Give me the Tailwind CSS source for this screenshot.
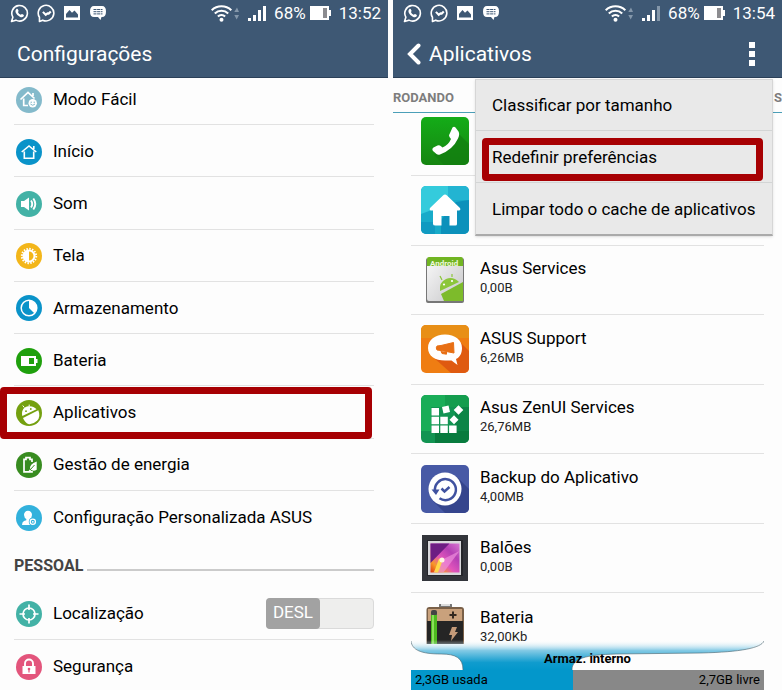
<!DOCTYPE html>
<html lang="pt-BR">
<head>
<meta charset="utf-8">
<meta name="viewport" content="width=device-width, initial-scale=1">
<title>Configurações</title>
<script src="https://cdn.jsdelivr.net/npm/@tailwindcss/browser@4"></script>
</head>
<body class="bg-[#fdfdfd] font-[Roboto,'Noto_Sans',sans-serif] text-black">

<svg class="hidden" aria-hidden="true">
  <!-- status bar glyphs -->
  <symbol id="whatsapp" viewBox="0 0 20 20">
    <path d="M1.6 18.4 3 13.9A8.2 8.2 0 1 1 6.2 17Z" fill="none" stroke="#fff" stroke-width="1.7" stroke-linejoin="round"/>
    <path d="M6.6 5.5c.8-.8 1.5-.5 1.8.3l.6 1.3c.2.6-.6 1-.7 1.4.6 1.3 1.6 2.3 3 2.900.5-.2.8-1.100 1.400-.9l1.500.8c.8.400.4 1.700-.3 2.200-1 .7-2.400.500-3.600-.1-2-1-3.500-2.600-4.300-4.400-.4-1.200-.4-2.500.6-3.500Z" fill="#fff"/>
  </symbol>
  <symbol id="messenger" viewBox="0 0 20 20">
    <path d="M2.600 18.300V14A8.200 8.200 0 1 1 6 17Z" fill="none" stroke="#fff" stroke-width="1.700" stroke-linejoin="round"/>
    <path d="m6.200 8.300 3 3 1.800-1.400 1.300.2 2.200-2.300" fill="none" stroke="#fff" stroke-width="2.200"/>
  </symbol>
  <symbol id="picture" viewBox="0 0 16 14">
    <path fill-rule="evenodd" d="M0 0h16v14H0ZM2 11.500h12V8.500L10.500 4.500 8 6.800 5.500 4 2 8Z" fill="#fff"/>
  </symbol>
  <symbol id="bubble" viewBox="0 0 16 14">
    <path d="M4 0h8q4 0 4 5.500T12 11h-.5l-1 3-2.500-3H4Q0 11 0 5.500T4 0Z" fill="#fff"/>
    <path d="M3.500 3.500h9M3.500 5.700h9M3.500 7.900h9" stroke="#3e5874" stroke-width="1" stroke-dasharray="3 .6"/>
  </symbol>
  <symbol id="wifi" viewBox="0 0 28 18">
    <g fill="none" stroke="#fff" stroke-width="2.100"><path d="M.7 6.200a14.300 14.300 0 0 1 19.600 0"/><path d="M3.800 9.400a9.700 9.700 0 0 1 13.400 0"/><path d="M6.900 12.600a5.200 5.200 0 0 1 7.200 0"/></g>
    <circle cx="10.500" cy="15.700" r="2" fill="#fff"/>
    <path d="m23.300 8 2.700-4.500L28 8Zm0 3H28l-2.300 4.500Z" fill="#8497aa"/>
  </symbol>
  <symbol id="signal" viewBox="0 0 18 16">
    <path d="M0 13h3v3H0Z" fill="#fff"/><path d="M5 10h3v6H5Zm5-5h3v11h-3Z" fill="#fff"/><path d="M15 1h3v15h-3Z" fill="currentColor"/>
  </symbol>
  <symbol id="battery" viewBox="0 0 21 14">
    <path d="M0 0h19v4h2v6h-2v4H0Z" fill="#fff"/><path d="M13 2h4v10h-4Z" fill="#8c8c90"/>
  </symbol>

  <!-- settings icons -->
  <symbol id="easy" viewBox="0 0 26 26">
    <circle cx="13" cy="13" r="13" fill="#84bacb"/>
    <path d="M4.500 12.500 12 5.500l6.500 6M17 9V6M7.700 11.500v7H12" fill="none" stroke="#fff" stroke-width="1.700"/>
    <circle cx="16.700" cy="16.300" r="4.200" fill="#fff"/><circle cx="15.200" cy="15.200" r=".7" fill="#84bacb"/><circle cx="18.200" cy="15.200" r=".7" fill="#84bacb"/><path d="M14.400 17q2.300 2.600 4.600 0" fill="none" stroke="#84bacb"/>
  </symbol>
  <symbol id="home" viewBox="0 0 26 26">
    <circle cx="13" cy="13" r="13" fill="#0a93c9"/>
    <path d="m5.700 13 7.300-6 7.300 6M17.800 10V7M8.300 12.500v6.700h9.400v-6.700" fill="none" stroke="#fff" stroke-width="1.600"/>
  </symbol>
  <symbol id="sound" viewBox="0 0 26 26">
    <circle cx="13" cy="13" r="13" fill="#43b2a6"/>
    <path d="M5 10h3l5-3.500v13L8 16H5Z" fill="#fff"/><path d="M15 9.500q2.500 3.500 0 7M17.300 7.500q4 5.500 0 11" fill="none" stroke="#fff" stroke-width="1.900"/>
  </symbol>
  <symbol id="display" viewBox="0 0 26 26">
    <circle cx="13" cy="13" r="13" fill="#f3b61a"/>
    <circle cx="13" cy="13" r="7.200" fill="none" stroke="#fff" stroke-width="2" stroke-dasharray="1.500 1.327"/>
    <circle cx="13" cy="13" r="5.500" fill="none" stroke="#fff" stroke-width="2"/><path d="M13 7.500v11a5.500 5.500 0 0 1 0-11Z" fill="#fff"/>
  </symbol>
  <symbol id="storage" viewBox="0 0 26 26">
    <circle cx="13" cy="13" r="13" fill="#0a93c9"/>
    <circle cx="13" cy="13" r="7.800" fill="none" stroke="#fff" stroke-width="1.500"/><path d="M13 13V5.500a7.500 7.500 0 0 1 5.300 12.800Z" fill="#fff"/>
  </symbol>
  <symbol id="power" viewBox="0 0 26 26">
    <circle cx="13" cy="13" r="13" fill="#1fa00d"/>
    <path fill-rule="evenodd" d="M5 8h15v3h1.500v4H20v3H5Zm8 2v6h5v-6Z" fill="#fff"/>
  </symbol>
  <symbol id="apps" viewBox="0 0 26 26">
    <circle cx="13" cy="13" r="13" fill="#74a010"/>
    <path d="M6.300 16C4.800 9.500 9 6.700 12.300 6.300c4-.4 7 1.200 8.200 3Z" fill="#fff"/>
    <path d="M7 18 22.300 10.300q2.700 6.500-1.300 10.400Q17 24.500 13 24.300 9 23 7 18Z" fill="#fff"/>
    <path d="m8.300 7.500-1.600-2M13.200 6.500V4.600" stroke="#fff"/><circle cx="10" cy="11.200" r=".9" fill="#74a010"/><circle cx="14.800" cy="9" r=".9" fill="#74a010"/>
  </symbol>
  <symbol id="energy" viewBox="0 0 26 26">
    <circle cx="13" cy="13" r="13" fill="#388c20"/>
    <path d="M16 10V7.300h-2V5.700h-4v1.600H8v12.500h8V19" fill="none" stroke="#fff" stroke-width="1.700"/>
    <path d="M20.700 9.500v8.200q-3 2-5.300.3L13 20.500l-.8-1 2-2.500q-1-4.800 6.500-7.500Z" fill="#fff"/><path d="m14 18 4.500-5" stroke="#388c20" stroke-width="1"/>
  </symbol>
  <symbol id="custom" viewBox="0 0 26 26">
    <circle cx="13" cy="13" r="13" fill="#32b1dc"/>
    <path d="M12 5.700a4 4 0 0 1 4 4.300q-.3 3-2 4v1.500L17 17l-3 3H6q0-3 2-4l2.300-.8V14Q8.300 13 8 10a4 4 0 0 1 4-4.300Z" fill="#fff"/>
    <circle cx="16.800" cy="16.800" r="4" fill="#32b1dc"/><circle cx="16.800" cy="16.800" r="2.600" fill="none" stroke="#fff" stroke-width="1.300"/><circle cx="16.800" cy="16.800" r=".9" fill="#fff"/>
  </symbol>
  <symbol id="location" viewBox="0 0 26 26">
    <circle cx="13" cy="13" r="13" fill="#43b2a6"/>
    <circle cx="13" cy="13" r="6" fill="none" stroke="#fff" stroke-width="1.700"/><path d="M13 3.500V9M13 17v5.500M3.500 13H9M17 13h5.500" stroke="#fff" stroke-width="1.700"/>
  </symbol>
  <symbol id="lock" viewBox="0 0 26 26">
    <circle cx="13" cy="13" r="13" fill="#e3557c"/>
    <path d="M9 12.500V9.500a4 4 0 0 1 8 0v3" fill="none" stroke="#fff" stroke-width="1.900"/><path d="M6.500 12h13v8h-13Z" fill="#fff"/><circle cx="13" cy="15" r="1.300" fill="#e3557c"/><path d="M12.400 15h1.200v3.500h-1.200Z" fill="#e3557c"/>
  </symbol>
</svg>

<div class="flex h-screen gap-[5px] overflow-hidden">

  <!-- Settings -->
  <section class="flex-[388] overflow-hidden" aria-label="Configurações">
    <header class="h-[78px] border-b border-[#2b4058] bg-[#3e5874] text-white">
      <div class="flex h-[26px] items-center pl-[10px] pr-[7px] text-[17px] leading-none">
        <div class="flex flex-1 items-center gap-2">
          <svg class="size-[19px]"><use href="#whatsapp"/></svg>
          <svg class="size-[19px]"><use href="#messenger"/></svg>
          <svg class="h-[14px] w-4"><use href="#picture"/></svg>
          <svg class="ml-[2px] h-[14px] w-4"><use href="#bubble"/></svg>
        </div>
        <svg class="mr-[9px] h-[18px] w-[28px]"><use href="#wifi"/></svg>
        <svg class="mr-2 h-4 w-[18px] text-white"><use href="#signal"/></svg>
        <span class="mr-1">68%</span>
        <svg class="mr-2 h-[14px] w-[21px]"><use href="#battery"/></svg>
        <time>13:52</time>
      </div>
      <h1 class="px-[17px] pt-[13px] text-[21px] leading-[30px]">Configurações</h1>
    </header>

    <ul class="mx-[14px] grid min-h-[465px] grid-rows-[47px_repeat(8,1fr)] text-[17px]">
      <li class="border-b border-[#e2e2e2]"><a href="#" class="flex h-full items-center gap-[11px] pb-[2px] pl-[2px]"><svg class="size-[26px]"><use href="#easy"/></svg>Modo Fácil</a></li>
      <li class="border-b border-[#e2e2e2]"><a href="#" class="flex h-full items-center gap-[11px] pl-[2px] pt-[2px]"><svg class="size-[26px]"><use href="#home"/></svg>Início</a></li>
      <li class="border-b border-[#e2e2e2]"><a href="#" class="flex h-full items-center gap-[11px] pl-[2px] pt-[2px]"><svg class="size-[26px]"><use href="#sound"/></svg>Som</a></li>
      <li class="border-b border-[#e2e2e2]"><a href="#" class="flex h-full items-center gap-[11px] pl-[2px] pt-[2px]"><svg class="size-[26px]"><use href="#display"/></svg>Tela</a></li>
      <li class="border-b border-[#e2e2e2]"><a href="#" class="flex h-full items-center gap-[11px] pl-[2px] pt-[2px]"><svg class="size-[26px]"><use href="#storage"/></svg>Armazenamento</a></li>
      <li class="border-b border-[#e2e2e2]"><a href="#" class="flex h-full items-center gap-[11px] pl-[2px] pt-[2px]"><svg class="size-[26px]"><use href="#power"/></svg>Bateria</a></li>
      <li class="relative border-b border-[#e2e2e2]"><a href="#" class="flex h-full items-center gap-[11px] pl-[2px] pt-[2px]"><svg class="size-[26px]"><use href="#apps"/></svg>Aplicativos</a>
        <span class="pointer-events-none absolute -bottom-px -left-[14px] right-[2px] top-px rounded border-[7px] border-[#a70003]"></span></li>
      <li class="border-b border-[#e2e2e2]"><a href="#" class="flex h-full items-center gap-[11px] pl-[2px] pt-[2px]"><svg class="size-[26px]"><use href="#energy"/></svg>Gestão de energia</a></li>
      <li><a href="#" class="flex h-full items-center gap-[11px] pl-[2px] pt-[2px]"><svg class="size-[26px]"><use href="#custom"/></svg>Configuração Personalizada ASUS</a></li>
    </ul>

    <div class="mx-[14px] flex h-11 items-center gap-1 pt-[2px] text-[#444]">
      <h2 class="text-[16px] font-bold leading-5">PESSOAL</h2>
      <span class="mt-2 h-[2px] flex-1 bg-[#cbcbcb]"></span>
    </div>
    <ul class="mx-[14px] text-[17px]">
      <li class="flex h-[53px] items-center border-b border-[#e2e2e2]">
        <a href="#" class="flex flex-1 items-center gap-[11px] pl-[2px] pt-[2px]"><svg class="size-[26px]"><use href="#location"/></svg>Localização</a>
        <button type="button" role="switch" aria-checked="false" aria-label="Localização" class="flex h-[31px] w-[108px] rounded border border-[#dadada] bg-[#eeeeed]"><span class="-my-px -ml-px flex h-[31px] w-[54px] items-center justify-center rounded bg-[#a2a2a2] text-white">DESL</span></button>
      </li>
      <li><a href="#" class="flex h-[52px] items-center gap-[11px] pl-[2px] pt-[2px]"><svg class="size-[26px]"><use href="#lock"/></svg>Segurança</a></li>
    </ul>
  </section>

  <!-- Applications -->
  <section class="relative flex-[389] overflow-hidden" aria-label="Aplicativos">
    <header class="h-[78px] border-b border-[#2b4058] bg-[#3e5874] text-white">
      <div class="flex h-[26px] items-center pl-[10px] pr-[7px] text-[17px] leading-none">
        <div class="flex flex-1 items-center gap-2">
          <svg class="size-[19px]"><use href="#whatsapp"/></svg>
          <svg class="size-[19px]"><use href="#messenger"/></svg>
          <svg class="h-[14px] w-4"><use href="#picture"/></svg>
          <svg class="ml-[2px] h-[14px] w-4"><use href="#bubble"/></svg>
        </div>
        <svg class="mr-[9px] h-[18px] w-[28px]"><use href="#wifi"/></svg>
        <svg class="mr-2 h-4 w-[18px] text-[#8497aa]"><use href="#signal"/></svg>
        <span class="mr-1">68%</span>
        <svg class="mr-2 h-[14px] w-[21px]"><use href="#battery"/></svg>
        <time>13:54</time>
      </div>
      <div class="flex items-center pl-[14px] pr-[27px] pt-[13px]">
        <button type="button" aria-label="Voltar" class="mr-2"><svg class="h-[22px] w-[14px]" viewBox="0 0 14 22"><path d="M11.500 2.500 3 11l8.500 8.500" fill="none" stroke="#fff" stroke-width="4" stroke-linecap="round"/></svg></button>
        <h1 class="flex-1 text-[21px] leading-[30px]">Aplicativos</h1>
        <button type="button" aria-label="Mais opções" class="flex flex-col gap-[3px]"><span class="size-[6px] bg-white"></span><span class="size-[6px] bg-white"></span><span class="size-[6px] bg-white"></span></button>
      </div>
    </header>

    <nav class="flex h-[35px] items-center justify-between overflow-hidden border-b border-[#4b9fb8] pt-[6px] text-[13px] font-bold text-[#7d7d7d]">
      <a href="#">RODANDO</a><a href="#">S</a>
    </nav>

    <ul class="mx-[18px] grid min-h-[550px] grid-rows-[63px_repeat(7,1fr)]">
      <li class="border-b border-[#e2e2e2]"><a href="#" aria-label="Telefone" class="flex h-full items-center pb-[6px] pl-[10px]">
        <svg class="size-[48px]" viewBox="0 0 48 48"><defs><linearGradient id="gp" x2="0" y2="1"><stop stop-color="#14ac18"/><stop offset="1" stop-color="#168511"/></linearGradient></defs><rect width="48" height="48" rx="5" fill="url(#gp)"/><path d="m38 17-10 12-15 9 10 10h20a5 5 0 0 0 5-5V27Z" fill="#137d10" opacity=".7"/><path d="M31.500 10.500q1.500-1.500 3 0l3 4q1.500 3-.5 7Q32 32.500 19 37.500q-2 .7-3.500-.5l-3.500-3q-1.500-2 .5-3.500l4-2q2-.8 3.500.8l1.500 1.200q6-2.500 8.500-8.500l-1.500-2q-1.200-1.800.3-3.500Z" fill="#fff"/></svg></a></li>
      <li class="border-b border-[#e2e2e2]"><a href="#" aria-label="Início" class="flex h-full items-center pl-[10px]">
        <svg class="size-[48px]" viewBox="0 0 48 48"><defs><clipPath id="rc"><rect width="48" height="48" rx="5"/></clipPath></defs><g clip-path="url(#rc)"><path d="M0 0h48v48H0Z" fill="#18abc9"/><path d="M0 0h27v18L0 28Z" fill="#34cbdc"/><path d="M27 0h21v14H27Z" fill="#23b4d2"/><path d="m35 16 13-2v34H20V34Z" fill="#0c91bb"/><path d="M0 36h14v12H0Z" fill="#109ac1"/></g><path d="M24 8.500q1 0 2 1L39 22q1 2-1 2.500h-2V38q0 1.500-1.500 1.500h-6V30h-8v9.500h-6Q12 39.500 12 38V24.500h-2Q8 24 9 22L22 9.500q1-1 2-1Z" fill="#fff"/></svg></a></li>
      <li class="border-b border-[#e2e2e2]"><a href="#" class="flex h-full items-center gap-[11px] pl-[10px]">
        <svg class="size-[48px]" viewBox="0 0 48 48"><defs><linearGradient id="gs" x2="1" y2="1"><stop stop-color="#fafafa"/><stop offset="1" stop-color="#c6c6c8"/></linearGradient></defs><rect x="5" y="2" width="38" height="45" rx="2" fill="#777"/><rect x="6" y="1" width="36" height="44" rx="2" fill="url(#gs)"/><path d="M6 3q0-2 2-2h32q2 0 2 2v7H6Z" fill="#71b522"/><text x="9" y="10" font-size="8" font-weight="700" fill="#eef8dd">Android</text><path d="M19 35q-1-9 6-12t13 3Z" fill="#8cc63b"/><path d="m20 38 22-12v19H23Z" fill="#7dbb2b"/><path d="m21 24-2-4M31 21v-3" stroke="#8cc63b" stroke-width="1.200"/><circle cx="23" cy="28.500" r="1.100" fill="#fff"/><circle cx="31" cy="25" r="1.100" fill="#fff"/></svg>
        <span class="pb-[5px] text-[17px] leading-[22px]">Asus Services<span class="block text-[13px] leading-[18px] text-[#222]">0,00B</span></span></a></li>
      <li class="border-b border-[#e2e2e2]"><a href="#" class="flex h-full items-center gap-[11px] pl-[10px]">
        <svg class="size-[48px]" viewBox="0 0 48 48"><rect width="48" height="48" rx="5" fill="#ef7d12"/><path d="M0 5a5 5 0 0 1 5-5h38a5 5 0 0 1 5 5v8H0Z" fill="#e88f16"/><path d="m39 17 9 9v17a5 5 0 0 1-5 5H30L13 33Z" fill="#df5a10"/><path d="M24 9.500c10 0 17 5.500 17 13.500 0 5-2 9-6 11l1.500 6-6-4.500H24C14 35.500 7 31 7 23S14 9.500 24 9.500Z" fill="#fff"/><path d="m32.500 17.500.5 10.500-13-2.500-4-.5q-1.500-2.200 0-4l4-.5ZM20 26l1 2.500 4.500.7V27" fill="#e86f14" stroke="#e86f14" stroke-width="1"/></svg>
        <span class="pb-[5px] text-[17px] leading-[22px]">ASUS Support<span class="block text-[13px] leading-[18px] text-[#222]">6,26MB</span></span></a></li>
      <li class="border-b border-[#e2e2e2]"><a href="#" class="flex h-full items-center gap-[11px] pl-[10px]">
        <svg class="size-[48px]" viewBox="0 0 48 48"><g clip-path="url(#rc)"><path d="M0 0h48v48H0Z" fill="#129452"/><path d="M0 0h24v12H10v24H0Z" fill="#1aad58"/><path d="M24 0h24v12H24Z" fill="#149d4e"/><path d="M34 12h14v24H34Z" fill="#0d8547"/><path d="M14 36h34v12H14Z" fill="#087b3e"/></g><path d="M10.500 13h7.500v7.500h-7.500Zm0 8.700h7.500v7.500h-7.500Zm0 8.800h7.500V38h-7.500Zm8.800-8.800h7.500v7.500h-7.500Zm0 8.800h7.500V38h-7.500Zm8.800 0h7.500V38h-7.500ZM21 12l6.500-1.500 1.500 6.500-6.500 1.500Zm16.500-1.800 4.800 4.800-4.800 4.800-4.800-4.800Zm-4.500 10 4.500 4.500-4.500 4.500-4.500-4.500Z" fill="#fff"/></svg>
        <span class="pb-[5px] text-[17px] leading-[22px]">Asus ZenUI Services<span class="block text-[13px] leading-[18px] text-[#222]">26,76MB</span></span></a></li>
      <li class="border-b border-[#e2e2e2]"><a href="#" class="flex h-full items-center gap-[11px] pl-[10px]">
        <svg class="size-[48px]" viewBox="0 0 48 48"><rect width="48" height="48" rx="5" fill="#4759a5"/><path d="m36 12 12 12v19a5 5 0 0 1-5 5H24L12 36Z" fill="#35458d"/><circle cx="24" cy="24" r="16.500" fill="#fff"/><path d="M14 26a10.500 10.500 0 1 1 4.500 7.300" fill="none" stroke="#4052a0" stroke-width="2.500"/><path d="M10.500 24.500h8L15 30Z" fill="#4052a0"/><path d="m20.500 23.500 3 3 5-4.500" fill="none" stroke="#4052a0" stroke-width="2.500"/></svg>
        <span class="pb-[5px] text-[17px] leading-[22px]">Backup do Aplicativo<span class="block text-[13px] leading-[18px] text-[#222]">4,00MB</span></span></a></li>
      <li class="border-b border-[#e2e2e2]"><a href="#" class="flex h-full items-center gap-[11px] pl-[10px]">
        <svg class="size-[48px]" viewBox="0 0 48 48"><defs><linearGradient id="gb" x1="0" y1="1" x2="1" y2="0"><stop stop-color="#e0330c"/><stop offset=".2" stop-color="#f79a28"/><stop offset=".42" stop-color="#e255bb"/><stop offset=".7" stop-color="#b43fb4"/><stop offset="1" stop-color="#d777d2"/></linearGradient></defs><path d="M1 1h46v46H1Z" fill="#33353b"/><path d="M6 6h36v36H6Z" fill="#24252a"/><path d="M7 7h33v34H7Z" fill="#d9d9dc"/><path d="M9.500 9.500h29v29h-29Z" fill="url(#gb)"/><path d="M9.500 9.500h19L9.500 29Z" fill="#6d1d83"/><path d="m38.500 17-18 9-8 12.500h10Z" fill="#ee8fdc" opacity=".7"/><path d="m13 38.500 5-14 4 1-5 13Z" fill="#ffd84a"/><circle cx="21" cy="26" r="2.500" fill="#fff4e4"/></svg>
        <span class="pb-[5px] text-[17px] leading-[22px]">Balões<span class="block text-[13px] leading-[18px] text-[#222]">0,00B</span></span></a></li>
      <li><a href="#" class="flex h-full items-center gap-[11px] pl-[10px]">
        <svg class="size-[48px]" viewBox="0 0 48 48"><path d="M18 1q0-2 2-2h9q2 0 2 2v3H18Z" fill="#777"/><path d="M20 0h9v2h-9Z" fill="#ddd"/><path d="M5.500 6q0-3 3-3H40q3 0 3 3v36H5.500Z" fill="#7a6048"/><path d="M7 5h34v13H7Z" fill="#c9a17c"/><path d="M6 17h36v25H6Z" fill="#252525"/><path d="M32 7.500v7M28.500 11h7" stroke="#33291f" stroke-width="2"/><path d="M31 23h5l-2 5h3l-7 9 1-6h-3Z" fill="#c59b79"/><rect x="10" y="6" width="6" height="6" rx="2" fill="#444"/><path d="M10 11h6v31h-6Z" fill="#4dba1e"/><path d="M11 11h2v31h-2Z" fill="#8be05a"/></svg>
        <span class="pb-[5px] text-[17px] leading-[22px]">Bateria<span class="block text-[13px] leading-[18px] text-[#222]">32,00Kb</span></span></a></li>
    </ul>

    <!-- Overflow menu -->
    <div role="menu" class="absolute left-[82px] right-[9px] top-[79px] divide-y divide-[#d3d5d5] border border-b-2 border-[#d6d6d6] border-b-[#aaa] bg-[#e9e9e9] text-[17px] shadow-sm">
      <button type="button" role="menuitem" class="flex h-[51px] w-full items-center pl-4 pt-[2px]">Classificar por tamanho</button>
      <div class="relative h-[52px]">
        <button type="button" role="menuitem" class="flex h-full w-full items-center pl-4 pt-[2px]">Redefinir preferências</button>
        <span class="pointer-events-none absolute bottom-px left-[6px] right-[9px] top-[7px] rounded border-[7px] border-[#a70003]"></span>
      </div>
      <button type="button" role="menuitem" class="flex h-[51px] w-full items-center pl-4 pt-[2px]">Limpar todo o cache de aplicativos</button>
    </div>

    <!-- Storage meter -->
    <footer class="absolute inset-x-[18px] bottom-0">
      <svg class="block h-[30px] w-full" viewBox="0 0 353 30" preserveAspectRatio="none" aria-hidden="true">
        <defs><linearGradient id="gf" x2="0" y2="1"><stop stop-color="#fdfdfd" stop-opacity="0"/><stop offset=".35" stop-color="#83cae5"/><stop offset=".75" stop-color="#109cce"/><stop offset="1" stop-color="#0397cb"/></linearGradient></defs>
        <path d="M0 4v26h353V4Z" fill="#fdfdfd"/>
        <path d="M0 0C1 10 10 14 30 14 45 14 52 18 52 30H161C161 18 175 15 205 14L290 13C330 12 350 8 353 0Z" fill="url(#gf)"/>
        <path d="M0 1C1 10 10 14 30 14 45 14 52 18 52 30M161 30C161 18 175 15 205 14L290 13C330 12 350 8 353 1" fill="none" stroke="#526b76" stroke-opacity=".65"/>
      </svg>
      <div class="flex h-5 items-center bg-[#888] text-[13px]">
        <div class="flex h-full w-[46%] items-center bg-[#0397cb] pl-1">2,3GB usada</div>
        <div class="flex-1 pr-1 text-right">2,7GB livre</div>
      </div>
      <strong class="absolute inset-x-0 top-[10px] text-center text-[13px] leading-[18px]">Armaz. interno</strong>
    </footer>
  </section>
</div>
</body>
</html>
